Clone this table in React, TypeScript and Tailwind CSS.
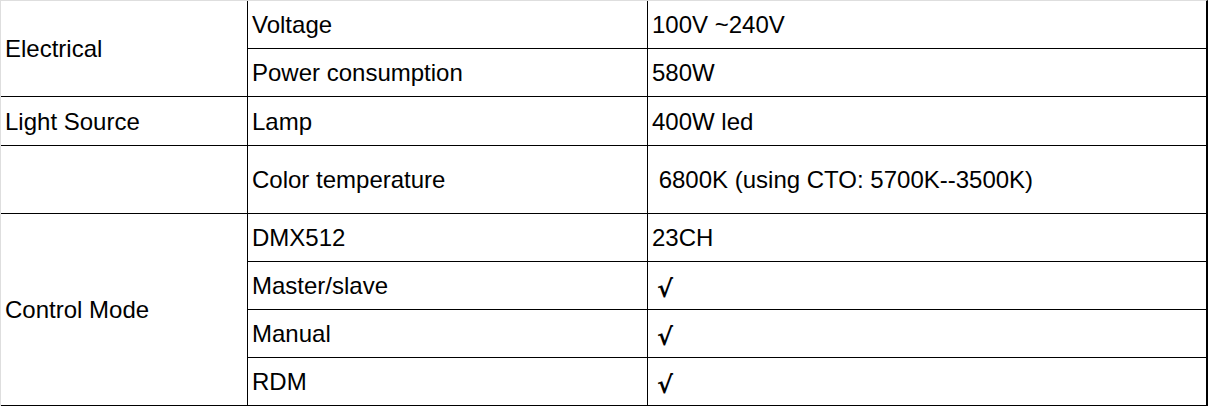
const rows = [
  { param: "Voltage", value: "100V ~240V" },
  { param: "Power consumption", value: "580W" },
  { param: "Lamp", value: "400W led" },
  { param: "Color temperature", value: "\u00a06800K (using CTO: 5700K--3500K)" },
  { param: "DMX512", value: "23CH" },
  { param: "Master/slave", value: "check" },
  { param: "Manual", value: "check" },
  { param: "RDM", value: "check" },
];

function Check() {
  return (
    <span className="ml-[5px] mt-[5px] inline-block font-['DejaVu_Sans',sans-serif] text-[24px] font-bold leading-none">
      √
    </span>
  );
}

export default function App() {
  return (
    <div className="h-[406px] w-[1208px] overflow-hidden bg-white">
      <div className="h-full w-full border-t border-l border-[#dedede] border-r-2 border-r-black font-['Liberation_Sans',Arial,sans-serif] text-[24px] leading-none text-black">
        <div className="grid h-full grid-cols-[247px_400px_1fr] grid-rows-[48px_48px_49px_68px_48px_48px_48px_48px]">
          {/* group column */}
          <div className="col-start-1 row-start-1 row-span-2 flex items-center border-r border-b border-black pl-[4px] pt-[1px]">
            Electrical
          </div>
          <div className="col-start-1 row-start-3 flex items-center border-r border-b border-black pl-[4px] pt-[1px]">
            Light Source
          </div>
          <div className="col-start-1 row-start-4 border-r border-b border-black" />
          <div className="col-start-1 row-start-5 row-span-4 flex items-center border-r border-b border-black pl-[4px] pt-[1px]">
            Control Mode
          </div>

          {/* parameter + value columns */}
          {rows.map((r, i) => (
            <div key={r.param} className="contents">
              <div
                className="col-start-2 flex items-center border-r border-b border-black pl-[4px] pt-[1px]"
                style={{ gridRowStart: i + 1 }}
              >
                {r.param}
              </div>
              <div
                className="col-start-3 flex items-center border-b border-black pl-[4px] pt-[1px]"
                style={{ gridRowStart: i + 1 }}
              >
                {r.value === "check" ? <Check /> : r.value}
              </div>
            </div>
          ))}
        </div>
      </div>
    </div>
  );
}
